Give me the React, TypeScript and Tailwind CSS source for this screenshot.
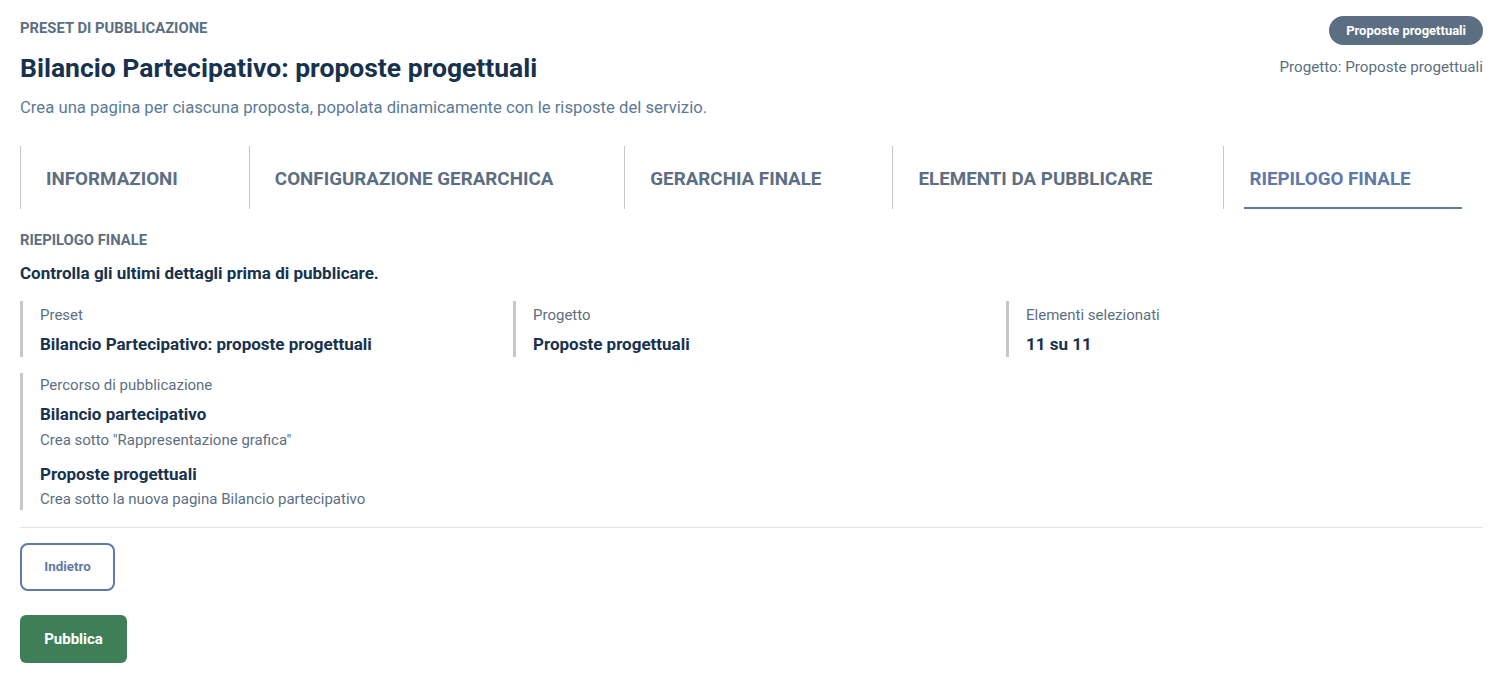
import React from "react";

const tabs = [
  "Informazioni",
  "Configurazione gerarchica",
  "Gerarchia finale",
  "Elementi da pubblicare",
  "Riepilogo finale",
];

const summary = [
  { label: "Preset", value: "Bilancio Partecipativo: proposte progettuali" },
  { label: "Progetto", value: "Proposte progettuali" },
  { label: "Elementi selezionati", value: "11 su 11" },
];

const App: React.FC = () => {
  const active = tabs.length - 1;

  return (
    <div className="min-h-screen bg-white px-5 pt-4 font-['Roboto',sans-serif]">
      {/* Header */}
      <div className="flex items-start justify-between">
        <div>
          <p className="mt-[2px] text-[14.8px] font-bold uppercase leading-5 text-[#5c6f82]">
            Preset di pubblicazione
          </p>
          <h1 className="mt-[14px] text-[26.5px] font-bold leading-8 text-[#17324d]">
            Bilancio Partecipativo: proposte progettuali
          </h1>
          <p className="mt-3 text-[16.7px] leading-6 text-[#5b7a97]">
            Crea una pagina per ciascuna proposta, popolata dinamicamente con le risposte del servizio.
          </p>
        </div>
        <div className="flex flex-col items-end">
          <span className="flex h-[29px] items-center rounded-full bg-[#5c6f82] px-[17px] text-[13px] font-bold text-white">
            Proposte progettuali
          </span>
          <p className="mt-3 text-[15.2px] leading-5 text-[#5c6f82]">
            Progetto: Proposte progettuali
          </p>
        </div>
      </div>

      {/* Steps */}
      <ul className="mt-[26px] flex h-[63px]">
        {tabs.map((tab, i) => (
          <li key={tab} className="flex h-full border-l border-[#c5c7c9] px-5">
            <a
              className={`flex h-full items-center border-b-2 pl-[5px] pr-[51px] pt-[5px] text-[18.8px] font-bold uppercase ${
                i === active
                  ? "border-[#5f7aa8] text-[#5f7aa8]"
                  : "border-transparent text-[#5c6f82]"
              }`}
            >
              {tab}
            </a>
          </li>
        ))}
      </ul>

      {/* Summary */}
      <p className="mt-[21px] text-[14.8px] font-bold uppercase leading-5 text-[#5c6f82]">
        Riepilogo finale
      </p>
      <p className="mt-[11px] text-[17px] font-bold leading-6 text-[#17324d]">
        Controlla gli ultimi dettagli prima di pubblicare.
      </p>

      <div className="mt-4 grid grid-cols-3 gap-x-4 gap-y-4">
        {summary.map((item) => (
          <div key={item.label} className="border-l-[3px] border-[#c5c7c9] pb-[1px] pl-[17px] pt-[4px]">
            <p className="text-[15px] leading-5 text-[#5c6f82]">{item.label}</p>
            <p className="mt-[7px] text-[17px] font-bold leading-6 text-[#17324d]">{item.value}</p>
          </div>
        ))}
        <div className="border-l-[3px] border-[#c5c7c9] pb-[1px] pl-[17px] pt-[2px]">
          <p className="text-[15px] leading-5 text-[#5c6f82]">Percorso di pubblicazione</p>
          <p className="mt-[7px] text-[17px] font-bold leading-6 text-[#17324d]">Bilancio partecipativo</p>
          <p className="mt-1 text-[15px] leading-5 text-[#5c6f82]">Crea sotto "Rappresentazione grafica"</p>
          <p className="mt-3 text-[17px] font-bold leading-6 text-[#17324d]">Proposte progettuali</p>
          <p className="mt-[3px] text-[15px] leading-5 text-[#5c6f82]">
            Crea sotto la nuova pagina Bilancio partecipativo
          </p>
        </div>
      </div>

      <div className="mt-[17px] border-t border-[#e3e4e8]" />

      {/* Actions */}
      <div className="flex flex-col items-start">
        <button className="mt-[15px] flex h-12 w-[95px] items-center justify-center rounded-lg border-2 border-[#5f7aa8] text-[13.4px] font-bold text-[#5f7aa8]">
          Indietro
        </button>
        <button className="mt-6 flex h-12 w-[107px] items-center justify-center rounded-md bg-[#3f7f57] text-[15px] font-bold text-white">
          Pubblica
        </button>
      </div>
    </div>
  );
};

export default App;
